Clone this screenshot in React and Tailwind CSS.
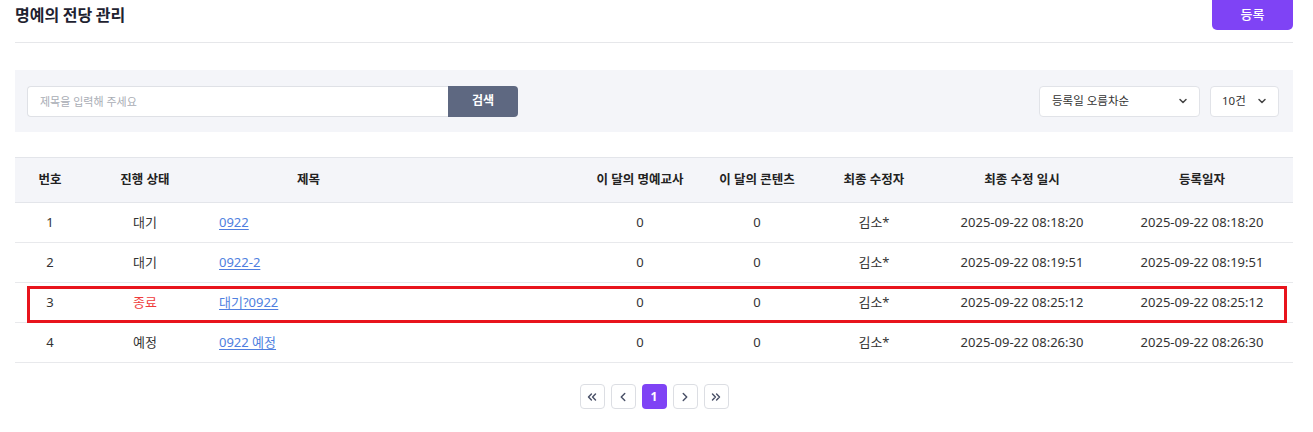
import { ChevronDown, ChevronLeft, ChevronRight, ChevronsLeft, ChevronsRight } from "lucide-react";

const rows = [
  { no: 1, status: "대기", title: "0922", editor: "김소*", updated: "2025-09-22 08:18:20", created: "2025-09-22 08:18:20" },
  { no: 2, status: "대기", title: "0922-2", editor: "김소*", updated: "2025-09-22 08:19:51", created: "2025-09-22 08:19:51" },
  { no: 3, status: "종료", title: "대기?0922", editor: "김소*", updated: "2025-09-22 08:25:12", created: "2025-09-22 08:25:12" },
  { no: 4, status: "예정", title: "0922 예정", editor: "김소*", updated: "2025-09-22 08:26:30", created: "2025-09-22 08:26:30" },
];

export default function App() {
  return (
    <div className="min-h-screen bg-white pl-[15px] pr-[20px] text-[#333] font-['Noto_Sans','Noto_Sans_CJK_KR',sans-serif] w-[1313px]">
      {/* Header */}
      <div className="flex items-start justify-between h-[43px] border-b border-[#e6e7ea]">
        <h1 className="pt-[3px] text-[16px] font-bold text-[#1e2230] leading-[22px] font-['Noto_Sans_CJK_KR',sans-serif]">명예의 전당 관리</h1>
        <button className="h-[30px] w-[81px] rounded-b-[5px] bg-[#7f43f5] text-white text-[13px] font-medium">등록</button>
      </div>

      {/* Filter */}
      <div className="mt-[27px] flex items-center justify-between bg-[#f4f5f9] h-[62px] pl-[12px] pr-[14px]">
        <div className="flex h-[31px]">
          <input
            placeholder="제목을 입력해 주세요"
            className="w-[421px] h-full rounded-l-[4px] border border-r-0 border-[#dfe1e6] bg-white px-[12px] text-[11px] placeholder:text-[#a9adb5] outline-none"
          />
          <button className="w-[70px] h-full rounded-r-[4px] bg-[#5e6881] text-white text-[12px] font-bold">검색</button>
        </div>
        <div className="flex gap-[10px]">
          <div className="flex items-center justify-between w-[161px] h-[31px] rounded-[4px] border border-[#e1e3e8] bg-white pl-[12px] pr-[10px] text-[11.5px] text-[#333]">
            <span>등록일 오름차순</span>
            <ChevronDown size={12} strokeWidth={3} className="text-[#444]" />
          </div>
          <div className="flex items-center justify-between w-[69px] h-[31px] rounded-[4px] border border-[#e1e3e8] bg-white pl-[11px] pr-[10px] text-[11.5px] text-[#333]">
            <span>10건</span>
            <ChevronDown size={12} strokeWidth={3} className="text-[#444]" />
          </div>
        </div>
      </div>

      {/* Table */}
      <div className="relative mt-[25px]">
        <table className="w-full table-fixed border-collapse text-[13px]">
          <colgroup>
            <col className="w-[70px]" />
            <col className="w-[120px]" />
            <col className="w-[376px]" />
            <col className="w-[118px]" />
            <col className="w-[116px]" />
            <col className="w-[118px]" />
            <col className="w-[178px]" />
            <col className="w-[182px]" />
          </colgroup>
          <thead>
            <tr className="h-[45px] bg-[#f4f5f9] border-t border-b border-[#e3e5ea] text-[#222] text-[12.5px]">
              <th className="font-bold">번호</th>
              <th className="font-bold">진행 상태</th>
              <th className="font-bold text-left pl-[92px]">제목</th>
              <th className="font-bold">이 달의 명예교사</th>
              <th className="font-bold">이 달의 콘텐츠</th>
              <th className="font-bold">최종 수정자</th>
              <th className="font-bold">최종 수정 일시</th>
              <th className="font-bold">등록일자</th>
            </tr>
          </thead>
          <tbody>
            {rows.map((r) => (
              <tr key={r.no} className="h-[40px] border-b border-[#e8e9ec] text-center">
                <td>{r.no}</td>
                <td className={r.status === "종료" ? "text-[#ef3b3b]" : ""}>{r.status}</td>
                <td className="text-left pl-[14px]">
                  <a href="#" className="text-[#4f7fe0] underline underline-offset-2">{r.title}</a>
                </td>
                <td>0</td>
                <td>0</td>
                <td>{r.editor}</td>
                <td>{r.updated}</td>
                <td>{r.created}</td>
              </tr>
            ))}
          </tbody>
        </table>
        {/* annotation */}
        <div className="absolute left-[12px] top-[129px] w-[1260px] h-[37px] border-[3px] border-[#e8141c] pointer-events-none" />
      </div>

      {/* Pagination */}
      <div className="mt-[21px] flex justify-center gap-[6px]">
        <button className="flex items-center justify-center w-[25px] h-[25px] rounded-[4px] border border-[#dcdee3] bg-white text-[#4a5168]">
          <ChevronsLeft size={14} strokeWidth={2.5} />
        </button>
        <button className="flex items-center justify-center w-[25px] h-[25px] rounded-[4px] border border-[#dcdee3] bg-white text-[#4a5168]">
          <ChevronLeft size={14} strokeWidth={2.5} />
        </button>
        <button className="flex items-center justify-center w-[25px] h-[25px] rounded-[4px] bg-[#7f43f5] text-white text-[12px] font-bold">1</button>
        <button className="flex items-center justify-center w-[25px] h-[25px] rounded-[4px] border border-[#dcdee3] bg-white text-[#4a5168]">
          <ChevronRight size={14} strokeWidth={2.5} />
        </button>
        <button className="flex items-center justify-center w-[25px] h-[25px] rounded-[4px] border border-[#dcdee3] bg-white text-[#4a5168]">
          <ChevronsRight size={14} strokeWidth={2.5} />
        </button>
      </div>
    </div>
  );
}
